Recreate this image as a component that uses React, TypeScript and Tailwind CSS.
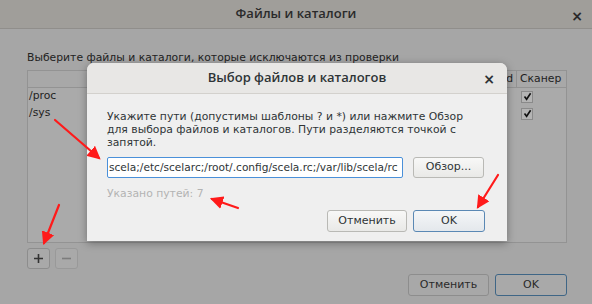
import React from "react";

const font = { fontFamily: '"DejaVu Sans", "Noto Sans", sans-serif' };

function Check() {
  return (
    <div className="w-[12px] h-[12px] border border-[#8a8a8a] bg-[#b4b4b4] flex items-center justify-center">
      <svg width="9" height="9" viewBox="0 0 9 9">
        <path d="M1.5 4.5 L3.6 7.3 L7.6 1.2" fill="none" stroke="#111" strokeWidth="1.6" />
      </svg>
    </div>
  );
}

export default function App() {
  return (
    <div
      className="relative w-[592px] h-[304px] overflow-hidden bg-[#a6a6a6] text-[#1e1e1e] text-[10.8px]"
      style={font}
    >
      {/* Outer title bar */}
      <div className="h-[29px] bg-[#a09e9a] border-b border-[#908e8b] flex items-center justify-center relative">
        <span
          className="text-[13px] font-semibold text-[#2a2a2a]"
          style={{ fontFamily: '"Open Sans", "Noto Sans", sans-serif' }}
        >
          Файлы и каталоги
        </span>
        <span className="absolute right-[9px] top-[6px] text-[14px] font-bold text-[#2a2a2a]">×</span>
      </div>

      {/* Outer content */}
      <div className="pl-[27px] pr-[25px] pt-[22px] flex flex-col">
        <div className="leading-[13px] text-[#222]">Выберите файлы и каталоги, которые исключаются из проверки</div>
        <div className="mt-[6px] h-[173px] border border-[#939393] bg-[#aaaaaa] flex flex-col">
          <div className="h-[17px] flex border-b border-[#939393] bg-[#a8a8a8]">
            <div className="flex-1 flex items-center justify-end pr-[3px] overflow-hidden">d</div>
            <div className="w-[50px] border-l border-[#939393] flex items-center pl-[3px]">Сканер</div>
          </div>
          <div className="h-[17px] flex items-center">
            <div className="flex-1 pl-[1px]">/proc</div>
            <div className="w-[50px] pl-[5px]"><Check /></div>
          </div>
          <div className="h-[17px] flex items-center">
            <div className="flex-1 pl-[1px]">/sys</div>
            <div className="w-[50px] pl-[5px]"><Check /></div>
          </div>
        </div>
        <div className="mt-[5px] flex gap-[5px]">
          <div className="w-[23px] h-[21px] rounded-[3px] border border-[#8d8d8d] bg-[#a9a9a9] flex items-center justify-center">
            <svg width="11" height="11" viewBox="0 0 11 11">
              <path d="M5.5 1 V10 M1 5.5 H10" stroke="#333" strokeWidth="1.6" />
            </svg>
          </div>
          <div className="w-[23px] h-[21px] rounded-[3px] border border-[#999] bg-[#a9a9a9] flex items-center justify-center">
            <svg width="11" height="11" viewBox="0 0 11 11">
              <path d="M1 5.5 H10" stroke="#7c7c7c" strokeWidth="1.6" />
            </svg>
          </div>
        </div>
        <div className="mt-[5px] flex justify-end gap-[6px]">
          <div className="w-[81px] h-[22px] rounded-[3px] border border-[#8d8d8d] bg-[#a8a8a8] flex items-center justify-center text-[#2a2a2a] text-[11px]">
            Отменить
          </div>
          <div className="w-[72px] h-[22px] rounded-[3px] border border-[#3f6686] bg-[#a9a9a9] flex items-center justify-center text-[#2a2a2a] text-[11px]">
            OK
          </div>
        </div>
      </div>

      {/* Modal dialog */}
      <div className="absolute left-[87px] top-[63px] w-[420px] h-[178px] rounded-t-[7px] bg-[#efefef] shadow-[0_2px_8px_rgba(0,0,0,0.35)] flex flex-col overflow-hidden">
        <div className="h-[31px] bg-[#e8e7e5] border-b border-[#d3d1cd] flex items-center justify-center relative">
          <span
            className="text-[13px] font-semibold text-[#2e3436]"
            style={{ fontFamily: '"Open Sans", "Noto Sans", sans-serif' }}
          >
            Выбор файлов и каталогов
          </span>
          <span className="absolute right-[12px] top-[6px] text-[14px] font-bold text-[#2e3436]">×</span>
        </div>
        <div className="pl-[20px] pr-[22px] pt-[16px] flex flex-col text-[#2e3436]">
          <div className="leading-[13px]">
            Укажите пути (допустимы шаблоны ? и *) или нажмите Обзор
            <br />
            для выбора файлов и каталогов. Пути разделяются точкой с
            <br />
            запятой.
          </div>
          <div className="mt-[8px] flex gap-[10px]">
            <div className="w-[296px] h-[21px] bg-white border border-[#4a90d9] rounded-[2px] flex items-center overflow-hidden pl-[1px] whitespace-nowrap text-[10.6px]">
              scela;/etc/scelarc;/root/.config/scela.rc;/var/lib/scela/rc
            </div>
            <div className="w-[71px] h-[21px] rounded-[3px] border border-[#b9b9b5] bg-gradient-to-b from-[#f8f8f7] to-[#e9e9e7] flex items-center justify-center text-[11px]">
              Обзор...
            </div>
          </div>
          <div className="mt-[9px] leading-[13px] text-[#b3b3b3]">Указано путей: 7</div>
          <div className="mt-[10px] flex justify-end gap-[6px]">
            <div className="w-[80px] h-[22px] rounded-[3px] border border-[#b9b9b5] bg-gradient-to-b from-[#f8f8f7] to-[#e9e9e7] flex items-center justify-center text-[11px]">
              Отменить
            </div>
            <div className="w-[72px] h-[22px] rounded-[3px] border border-[#5a88b4] bg-gradient-to-b from-[#f4f6f8] to-[#e4e8ec] flex items-center justify-center text-[11px]">
              OK
            </div>
          </div>
        </div>
      </div>

      {/* Red arrows */}
      <svg className="absolute left-0 top-0 pointer-events-none" width="592" height="304" viewBox="0 0 592 304">
        <defs>
          <marker id="ah" markerWidth="6" markerHeight="6" refX="5" refY="3" orient="auto" markerUnits="strokeWidth">
            <path d="M0 0 L6 3 L0 6 Z" fill="#ff1a1a" />
          </marker>
        </defs>
        <g stroke="#ff1a1a" strokeWidth="2.2" strokeLinecap="round" fill="none">
          <line x1="55" y1="120" x2="99" y2="158" markerEnd="url(#ah)" />
          <line x1="238" y1="208" x2="212" y2="199" markerEnd="url(#ah)" />
          <line x1="498" y1="175" x2="478" y2="207" markerEnd="url(#ah)" />
          <line x1="59" y1="205" x2="44" y2="243" markerEnd="url(#ah)" />
        </g>
      </svg>
    </div>
  );
}
